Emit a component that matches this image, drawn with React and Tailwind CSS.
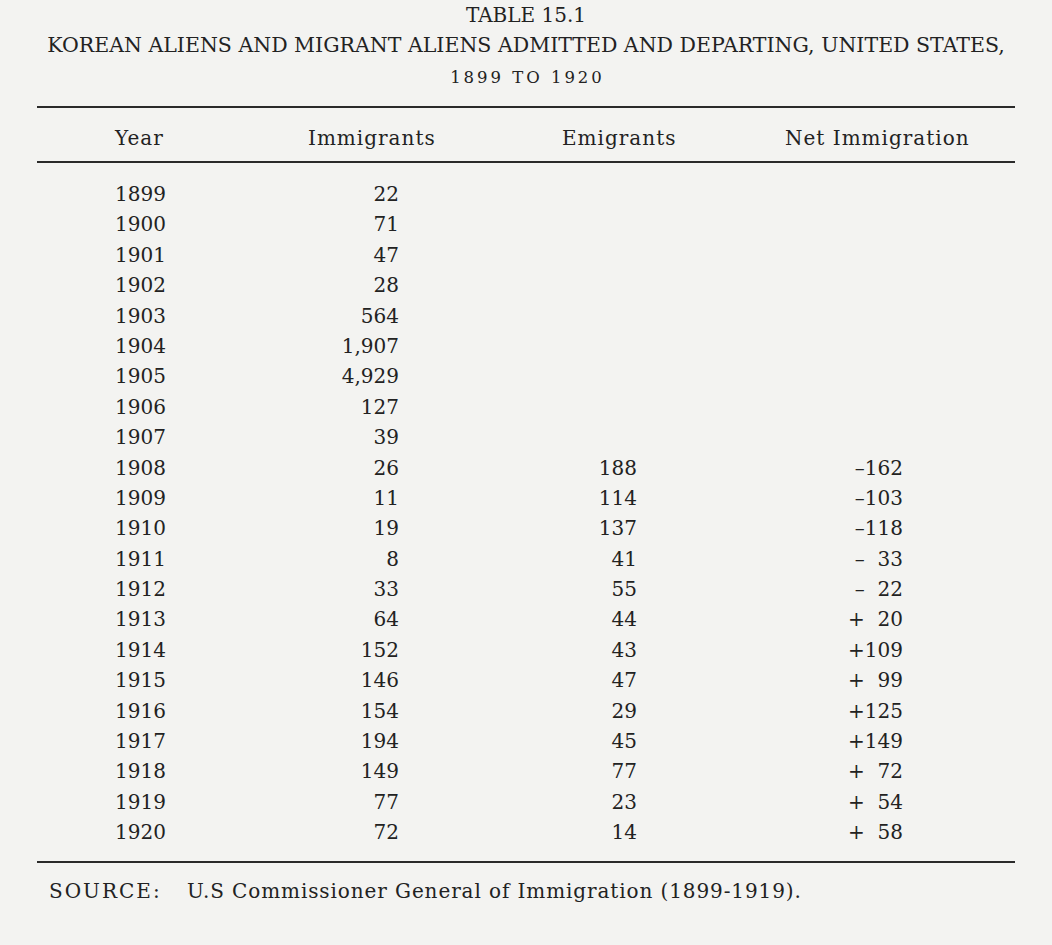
const rows = [
  ['1899', '22', '', ''],
  ['1900', '71', '', ''],
  ['1901', '47', '', ''],
  ['1902', '28', '', ''],
  ['1903', '564', '', ''],
  ['1904', '1,907', '', ''],
  ['1905', '4,929', '', ''],
  ['1906', '127', '', ''],
  ['1907', '39', '', ''],
  ['1908', '26', '188', '–162'],
  ['1909', '11', '114', '–103'],
  ['1910', '19', '137', '–118'],
  ['1911', '8', '41', '–\u200733'],
  ['1912', '33', '55', '–\u200722'],
  ['1913', '64', '44', '+\u200720'],
  ['1914', '152', '43', '+109'],
  ['1915', '146', '47', '+\u200799'],
  ['1916', '154', '29', '+125'],
  ['1917', '194', '45', '+149'],
  ['1918', '149', '77', '+\u200772'],
  ['1919', '77', '23', '+\u200754'],
  ['1920', '72', '14', '+\u200758'],
];

export default function App() {
  return (
    <div className="w-[1052px] h-[945px] bg-[#f3f3f1] text-[#222] font-['DejaVu_Serif',serif] overflow-hidden">
      <div className="pt-px text-center">
        <p className="text-[20px] leading-[28px]">TABLE 15.1</p>
        <p className="mt-[2px] text-[20.5px] leading-[28px]">
          KOREAN ALIENS AND MIGRANT ALIENS ADMITTED AND DEPARTING, UNITED STATES,
        </p>
        <p className="mt-[7px] pl-[0.18em] text-[16.5px] leading-[24px] tracking-[0.18em]">1899 TO 1920</p>
      </div>

      <div className="ml-[37px] w-[978px] mt-[16px]">
        <div className="h-[2px] bg-[#2a2a2a]" />

        <div className="flex h-[30px] mt-[15px] text-[20px] leading-[30px] tracking-[0.05em]">
          <span className="w-[271px] pl-[78px]">Year</span>
          <span className="w-[254px]">Immigrants</span>
          <span className="w-[223px]">Emigrants</span>
          <span>Net Immigration</span>
        </div>

        <div className="h-[2px] bg-[#2a2a2a] mt-[8px]" />

        <div className="mt-[16px] text-[20px] leading-[30.4px]">
          {rows.map(([year, imm, emi, net]) => (
            <div key={year} className="flex h-[30.4px]">
              <span className="w-[160px] pl-[78px]">{year}</span>
              <span className="w-[202px] text-right">{imm}</span>
              <span className="w-[238px] text-right">{emi}</span>
              <span className="w-[266px] text-right whitespace-pre">{net}</span>
            </div>
          ))}
        </div>

        <div className="h-[2px] bg-[#2a2a2a] mt-[13px]" />

        <p className="flex mt-[13px] pl-[12px] text-[20px] leading-[30px]">
          <span className="w-[138px] tracking-[0.1em]">SOURCE:</span>
          <span className="tracking-[0.045em]">U.S Commissioner General of Immigration (1899-1919).</span>
        </p>
      </div>
    </div>
  );
}
